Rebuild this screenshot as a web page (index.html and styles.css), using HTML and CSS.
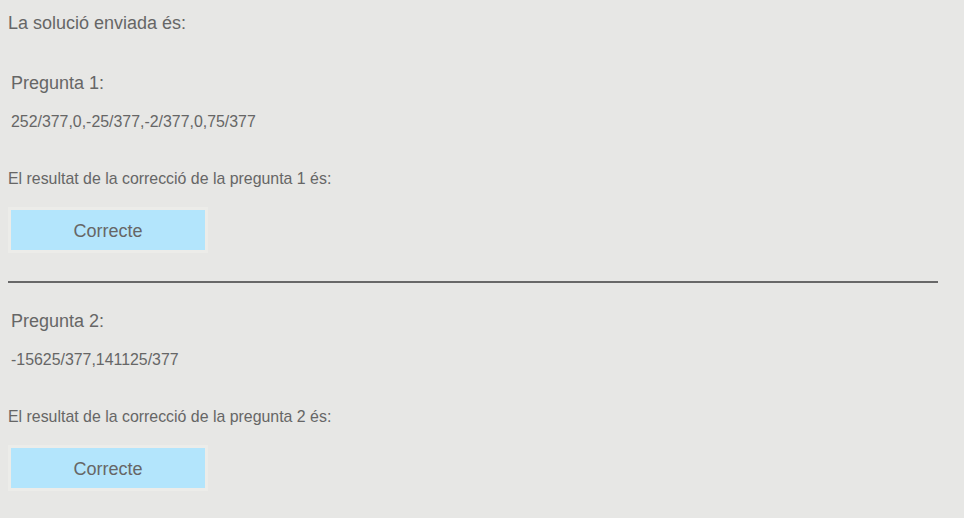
FILE: index.html
```html
<!DOCTYPE html>
<html lang="ca">
<head>
<meta charset="utf-8">
<title>Solució</title>
<link rel="stylesheet" href="styles.css">
</head>
<body>
<div class="page">
  <p class="heading">La solució enviada és:</p>
  <section class="block">
    <p class="question">Pregunta 1:</p>
    <p class="answer">252/377,0,-25/377,-2/377,0,75/377</p>
    <p class="label">El resultat de la correcció de la pregunta 1 és:</p>
    <div class="result">Correcte</div>
  </section>
  <hr class="divider">
  <section class="block">
    <p class="question q-after">Pregunta 2:</p>
    <p class="answer">-15625/377,141125/377</p>
    <p class="label">El resultat de la correcció de la pregunta 2 és:</p>
    <div class="result">Correcte</div>
  </section>
</div>
</body>
</html>
```
FILE: styles.css
```css
html, body {
  margin: 0;
  background: #e7e7e5;
}
body {
  font-family: "Liberation Sans", Arial, sans-serif;
  color: #666666;
}
.page {
  width: 930px;
  padding: 12px 8px;
  display: flex;
  flex-direction: column;
}
p { margin: 0; }
.heading {
  font-size: 18px;
  line-height: 22px;
}
.block {
  display: flex;
  flex-direction: column;
}
.question {
  margin-top: 38px;
  padding-left: 3px;
  font-size: 18px;
  line-height: 22px;
}
.q-after { margin-top: 27px; }
.answer {
  margin-top: 18px;
  padding-left: 3px;
  font-size: 15.9px;
  line-height: 20px;
}
.label {
  margin-top: 37px;
  font-size: 15.9px;
  line-height: 20px;
}
.result {
  margin-top: 18px;
  box-sizing: border-box;
  width: 200px;
  height: 46px;
  padding-top: 2px;
  border: 3px solid #ecece9;
  background: #b3e5fc;
  display: flex;
  align-items: center;
  justify-content: center;
  font-size: 18px;
}
.divider {
  margin: 28px 0 0 0;
  height: 0;
  border: 0;
  border-top: 2px solid #686868;
}
```
